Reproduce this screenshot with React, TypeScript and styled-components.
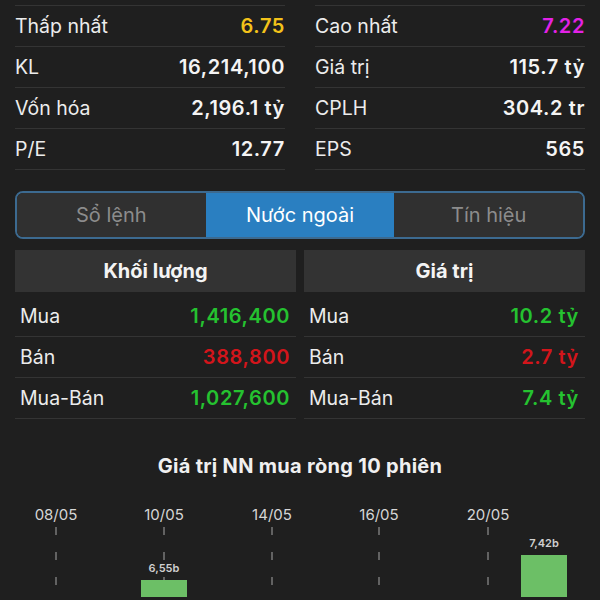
import React, { useState } from 'react';
import styled, { createGlobalStyle } from 'styled-components';

const GlobalStyle = createGlobalStyle`
    body {
        margin: 0;
        background-color: #1f1f1f;
        font-family: Inter, "Noto Sans", sans-serif;
        color: #f2f2f2;
    }
`;

const Page = styled.div`
    width: 600px;
    height: 600px;
    overflow: hidden;
    background-color: #1f1f1f;
`;

const Section = styled.div`
    padding: 0 15px;
`;

const StatsGrid = styled.div`
    display: grid;
    grid-template-columns: 1fr 1fr;
    column-gap: 30px;
    padding-top: 5px;
`;

const StatRow = styled.div`
    display: flex;
    align-items: center;
    justify-content: space-between;
    height: 40px;
    border-top: 1px solid #343434;
    font-size: 19.5px;

    &:last-child {
        border-bottom: 1px solid #343434;
    }
`;

const Label = styled.span`
    color: #ececec;
`;

const Value = styled.span<{ $color?: string }>`
    font-size: 20px;
    font-weight: 600;
    letter-spacing: 0.6px;
    color: ${(p) => p.$color || '#f4f4f4'};
`;

const Tabs = styled.div`
    display: flex;
    margin-top: 21px;
    height: 44px;
    border: 2px solid #3c6a90;
    border-radius: 8px;
    overflow: hidden;
`;

const Tab = styled.button<{ $active?: boolean }>`
    flex: 1;
    border: none;
    background-color: ${(p) => (p.$active ? '#2a7fc1' : '#303030')};
    color: ${(p) => (p.$active ? '#ffffff' : '#8c8c8c')};
    font-family: inherit;
    font-size: 20px;
    cursor: pointer;
    padding: 0;
`;

const ForeignGrid = styled.div`
    display: grid;
    grid-template-columns: 1fr 1fr;
    column-gap: 8px;
    margin-top: 11px;
`;

const HeaderCell = styled.div`
    height: 42px;
    display: flex;
    align-items: center;
    justify-content: center;
    background-color: #333333;
    font-size: 20px;
    font-weight: 700;
    color: #f4f4f4;
`;

const FlowList = styled.div`
    padding-top: 4px;
`;

const FlowRow = styled.div`
    display: flex;
    align-items: center;
    justify-content: space-between;
    height: 40px;
    padding: 0 6px 0 5px;
    border-bottom: 1px solid #343434;
    font-size: 19.5px;
`;

const ChartTitle = styled.div`
    margin-top: 35px;
    text-align: center;
    font-size: 20px;
    font-weight: 700;
    letter-spacing: 0.3px;
    color: #f0f0f0;
`;

const ChartSvg = styled.svg`
    display: block;
    margin-top: 14px;
`;

const GREEN = '#25c230';
const RED = '#d3151b';

const stats = [
    [
        { label: 'Thấp nhất', value: '6.75', color: '#f3c21a' },
        { label: 'KL', value: '16,214,100' },
        { label: 'Vốn hóa', value: '2,196.1 tỷ' },
        { label: 'P/E', value: '12.77' },
    ],
    [
        { label: 'Cao nhất', value: '7.22', color: '#e322e6' },
        { label: 'Giá trị', value: '115.7 tỷ' },
        { label: 'CPLH', value: '304.2 tr' },
        { label: 'EPS', value: '565' },
    ],
];

const flows = [
    {
        title: 'Khối lượng',
        rows: [
            { label: 'Mua', value: '1,416,400', color: GREEN },
            { label: 'Bán', value: '388,800', color: RED },
            { label: 'Mua-Bán', value: '1,027,600', color: GREEN },
        ],
    },
    {
        title: 'Giá trị',
        rows: [
            { label: 'Mua', value: '10.2 tỷ', color: GREEN },
            { label: 'Bán', value: '2.7 tỷ', color: RED },
            { label: 'Mua-Bán', value: '7.4 tỷ', color: GREEN },
        ],
    },
];

const ticks = [
    { x: 56, label: '08/05' },
    { x: 164, label: '10/05' },
    { x: 272, label: '14/05' },
    { x: 379, label: '16/05' },
    { x: 488, label: '20/05' },
];

const bars = [
    { x: 164, top: 583, label: '6,55b' },
    { x: 544, top: 558, label: '7,42b' },
];

function NetBuyChart() {
    // svg top sits at y=495 on the page
    const offset = 495;
    return (
        <ChartSvg width={600} height={105} viewBox={`0 ${offset} 600 105`}>
            {ticks.map((t) => (
                <g key={t.label}>
                    <text
                        x={t.x}
                        y={523}
                        textAnchor='middle'
                        fontSize={15}
                        fill='#d6d6d6'
                        fontFamily='Inter, sans-serif'
                    >
                        {t.label}
                    </text>
                    <line
                        x1={t.x}
                        x2={t.x}
                        y1={530}
                        y2={600}
                        stroke='#7a7a7a'
                        strokeWidth={1.5}
                        strokeDasharray='8 17'
                    />
                </g>
            ))}
            {bars.map((b) => (
                <g key={b.label}>
                    <rect x={b.x - 23} y={b.top} width={46} height={600 - b.top} fill='#6cbf66' />
                    <text
                        x={b.x}
                        y={b.top - 8}
                        textAnchor='middle'
                        fontSize={11}
                        fontWeight={600}
                        fill='#d0d0d0'
                        fontFamily='Inter, sans-serif'
                    >
                        {b.label}
                    </text>
                </g>
            ))}
        </ChartSvg>
    );
}

export default function App() {
    const [tab, setTab] = useState(1);
    const tabNames = ['Sổ lệnh', 'Nước ngoài', 'Tín hiệu'];

    return (
        <Page>
            <GlobalStyle />
            <Section>
                <StatsGrid>
                    {stats.map((col, i) => (
                        <div key={i}>
                            {col.map((s) => (
                                <StatRow key={s.label}>
                                    <Label>{s.label}</Label>
                                    <Value $color={s.color}>{s.value}</Value>
                                </StatRow>
                            ))}
                        </div>
                    ))}
                </StatsGrid>
                <Tabs>
                    {tabNames.map((name, i) => (
                        <Tab key={name} $active={tab === i} onClick={() => setTab(i)}>
                            {name}
                        </Tab>
                    ))}
                </Tabs>
                <ForeignGrid>
                    {flows.map((f) => (
                        <div key={f.title}>
                            <HeaderCell>{f.title}</HeaderCell>
                            <FlowList>
                                {f.rows.map((r) => (
                                    <FlowRow key={r.label}>
                                        <Label>{r.label}</Label>
                                        <Value $color={r.color}>{r.value}</Value>
                                    </FlowRow>
                                ))}
                            </FlowList>
                        </div>
                    ))}
                </ForeignGrid>
            </Section>
            <ChartTitle>Giá trị NN mua ròng 10 phiên</ChartTitle>
            <NetBuyChart />
        </Page>
    );
}
